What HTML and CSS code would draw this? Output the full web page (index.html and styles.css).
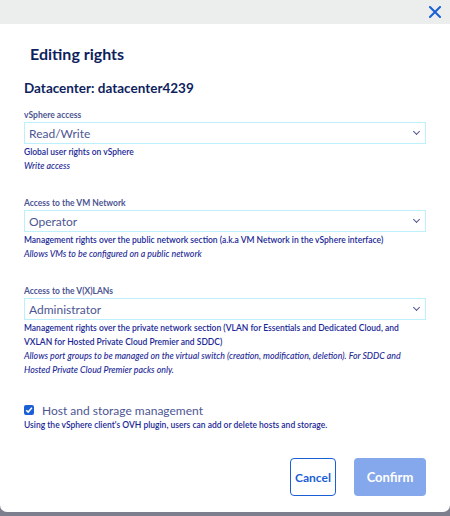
FILE: index.html
```html
<!DOCTYPE html>
<html lang="en">
<head>
	<meta charset="utf-8">
	<title>Editing rights</title>
	<link rel="stylesheet" href="styles.css">
</head>
<body>
	<div class="modal">
		<div class="modal-top">
			<button class="close-btn" aria-label="Close">
				<svg width="12" height="12" viewBox="0 0 12 12"><path d="M1 1L11 11M11 1L1 11" stroke="#1a5fd6" stroke-width="2" stroke-linecap="square"/></svg>
			</button>
		</div>
		<div class="modal-body">
			<h2 class="modal-title">Editing rights</h2>
			<h3 class="dc-name">Datacenter: datacenter4239</h3>

			<div class="field">
				<label class="field-label">vSphere access</label>
				<div class="select">Read/Write<span class="chev"></span></div>
				<div class="help">Global user rights on vSphere</div>
				<div class="help-it">Write access</div>
			</div>

			<div class="field">
				<label class="field-label">Access to the VM Network</label>
				<div class="select">Operator<span class="chev"></span></div>
				<div class="help">Management rights over the public network section (a.k.a VM Network in the vSphere interface)</div>
				<div class="help-it">Allows VMs to be configured on a public network</div>
			</div>

			<div class="field">
				<label class="field-label">Access to the V(X)LANs</label>
				<div class="select">Administrator<span class="chev"></span></div>
				<div class="help">Management rights over the private network section (VLAN for Essentials and Dedicated Cloud, and VXLAN for Hosted Private Cloud Premier and SDDC)</div>
				<div class="help-it">Allows port groups to be managed on the virtual switch (creation, modification, deletion). For SDDC and Hosted Private Cloud Premier packs only.</div>
			</div>

			<div class="check-row">
				<span class="checkbox">
					<svg width="8" height="8" viewBox="0 0 8 8"><path d="M1.2 4.2L3.2 6.1L6.9 1.8" fill="none" stroke="#fff" stroke-width="1.5"/></svg>
				</span>
				<span class="check-label">Host and storage management</span>
			</div>
			<div class="help">Using the vSphere client's OVH plugin, users can add or delete hosts and storage.</div>

			<div class="actions">
				<button class="btn btn-cancel">Cancel</button>
				<button class="btn btn-confirm">Confirm</button>
			</div>
		</div>
	</div>
</body>
</html>
```

FILE: styles.css
```css
html, body {
	margin: 0;
	padding: 0;
	background: #7d7f8f;
	height: 516px;
	overflow: hidden;
}

body {
	font-family: "Source Sans Pro", "Lato", "Noto Sans", sans-serif;
}

.modal {
	width: 450px;
	height: 512px;
	background: #fff;
	border-radius: 0 0 7px 7px;
	overflow: hidden;
}

.modal-top {
	height: 24px;
	background: #eceeed;
	display: flex;
	justify-content: flex-end;
	align-items: center;
	padding-right: 9px;
}

.close-btn {
	border: none;
	background: none;
	padding: 0;
	width: 12px;
	height: 12px;
	display: flex;
}

.modal-body {
	padding: 0 24px;
}

.modal-title {
	margin: 19px 0 0 6px;
	font-size: 16px;
	line-height: 22px;
	font-weight: 700;
	color: #0f1f5e;
}

.dc-name {
	margin: 14px 0 13px 0;
	font-size: 13.5px;
	line-height: 18px;
	font-weight: 700;
	color: #0f1f5e;
}

.field {
	margin-bottom: 25px;
}

.field-label {
	display: block;
	font-size: 8.5px;
	line-height: 11px;
	font-weight: 700;
	color: #4d5693;
	margin-bottom: 1px;
}

.select {
	height: 20px;
	border: 1px solid #bcf0fc;
	display: flex;
	align-items: center;
	padding-left: 4px;
	font-size: 12px;
	color: #4d5693;
	position: relative;
	margin-bottom: 1px;
}

.chev {
	position: absolute;
	right: 6px;
	top: 6px;
	width: 4px;
	height: 4px;
	border-right: 1.2px solid #4d5693;
	border-bottom: 1.2px solid #4d5693;
	transform: rotate(45deg);
}

.help {
	font-size: 8.5px;
	line-height: 14px;
	color: #1b2796;
	font-weight: 600;
}

.help-it {
	font-size: 8.8px;
	line-height: 14px;
	color: #1b2796;
	font-style: italic;
	font-weight: 500;
}

.check-row {
	display: flex;
	align-items: center;
	height: 16px;
}

.checkbox {
	width: 10px;
	height: 10px;
	background: #1a5fd6;
	border-radius: 2px;
	display: flex;
	align-items: center;
	justify-content: center;
	margin-right: 8px;
}

.check-label {
	font-size: 12px;
	color: #4d5693;
}

.actions {
	display: flex;
	justify-content: flex-end;
	gap: 18px;
	margin-top: 26px;
}

.btn {
	height: 38px;
	border-radius: 4px;
	font-family: inherit;
	font-size: 12px;
	font-weight: 700;
	padding: 0;
}

.btn-cancel {
	width: 46px;
	background: #fff;
	border: 1px solid #1a5fd6;
	color: #1a5fd6;
}

.btn-confirm {
	width: 72px;
	background: #85a7ec;
	border: none;
	color: #fff;
	font-size: 13px;
}
```
